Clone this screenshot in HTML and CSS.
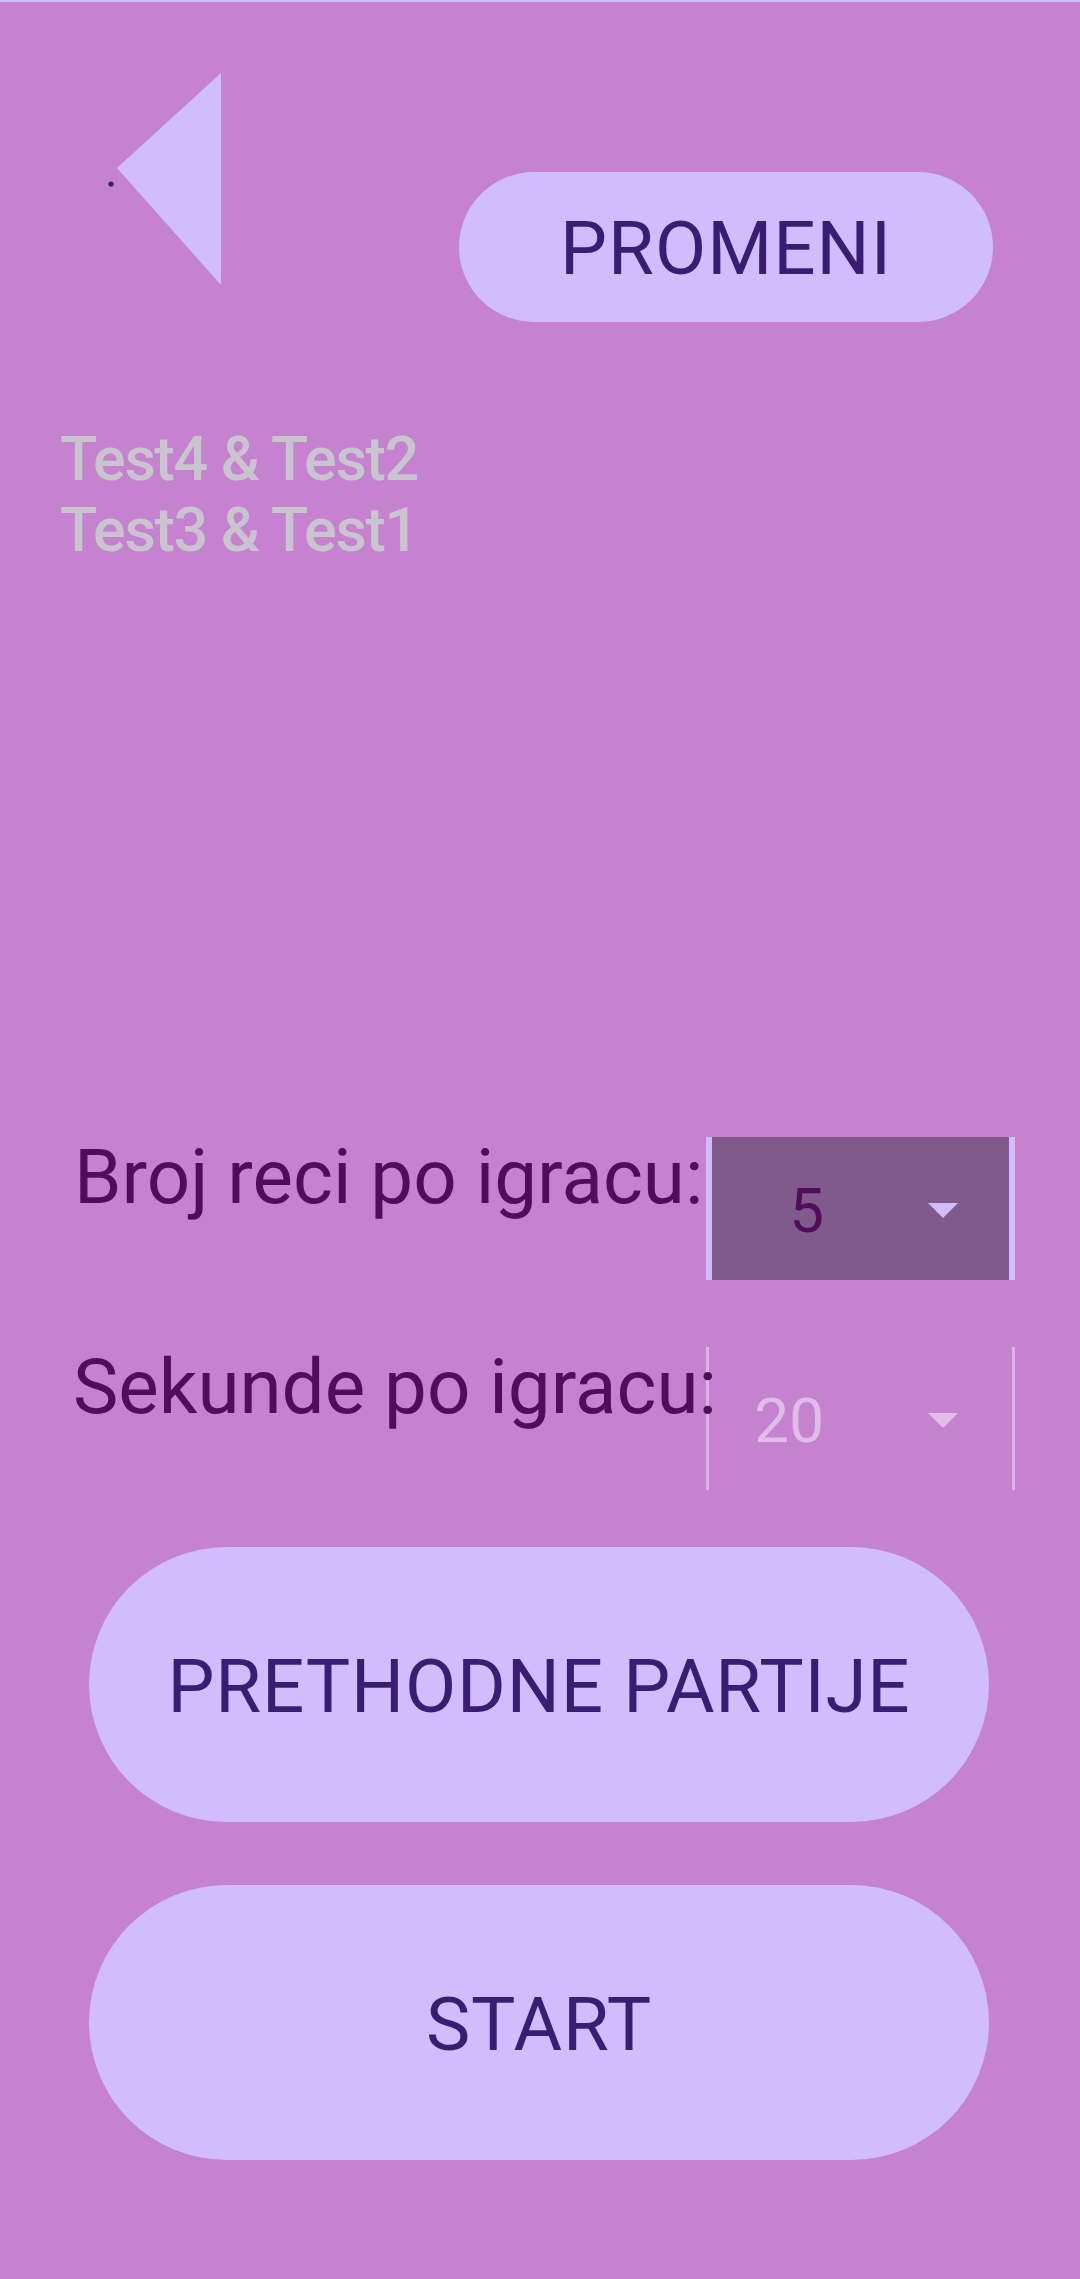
FILE: index.html
```html
<!DOCTYPE html>
<html lang="sr">
<head>
<meta charset="utf-8">
<title>Igra</title>
<link rel="stylesheet" href="styles.css">
</head>
<body>
<div class="screen">
  <div class="topline"></div>
  <header class="top">
    <button class="back" aria-label="Nazad">
      <svg width="130" height="240" viewBox="0 0 130 240">
        <polygon points="121,13 17,108 121,225" fill="#d0bcff"/>
        <circle cx="11" cy="124" r="2.6" fill="#381e72"/>
      </svg>
    </button>
    <button class="pill pill-small">PROMENI</button>
  </header>

  <div class="names">
    <div>Test4 &amp; Test2</div>
    <div>Test3 &amp; Test1</div>
  </div>

  <section class="settings">
    <div class="row">
      <div class="label">Broj reci po igracu:</div>
      <div class="dd dd-sel">
        <span class="val">5</span>
        <span class="arrow"></span>
      </div>
    </div>
    <div class="row">
      <div class="label">Sekunde po igracu:</div>
      <div class="dd dd-off">
        <span class="val">20</span>
        <span class="arrow"></span>
      </div>
    </div>
  </section>

  <div class="actions">
    <button class="pill pill-big">PRETHODNE PARTIJE</button>
    <button class="pill pill-big">START</button>
  </div>
</div>
</body>
</html>
```

FILE: styles.css
```css
html, body {
  margin: 0;
  padding: 0;
}
body {
  background: #c482cf;
  font-family: Roboto, "Noto Sans", sans-serif;
}
.screen {
  width: 1080px;
  min-height: 2279px;
  background: #c482cf;
}
.topline {
  height: 2px;
  background: #d0bcff;
}
.top {
  display: flex;
  justify-content: space-between;
  align-items: flex-start;
  padding: 0 87px 0 100px;
}
.back {
  margin: 58px 0 0 0;
  padding: 0;
  border: 0;
  background: none;
  width: 130px;
  height: 240px;
  display: block;
}
.back svg {
  display: block;
}
.pill {
  border: 0;
  background: #d0bcff;
  color: #381e72;
  font-family: Roboto, "Noto Sans", sans-serif;
  font-size: 74.5px;
  font-weight: 400;
  border-radius: 999px;
  display: flex;
  align-items: center;
  justify-content: center;
  padding: 5px 0 0 0;
  line-height: 1;
}
.pill-small {
  margin-top: 170px;
  width: 534px;
  height: 150px;
  letter-spacing: 1px;
}
.names {
  margin-top: 102px;
  padding-left: 60px;
  color: #cac4d0;
  font-size: 61px;
  font-weight: 500;
  line-height: 71px;
  letter-spacing: -1.3px;
}
.settings {
  margin-top: 571px;
  display: flex;
  flex-direction: column;
  gap: 67px;
}
.row {
  display: grid;
  grid-template-columns: 632px 309px;
  padding-left: 74px;
  height: 143px;
}
.label {
  position: relative;
  z-index: 1;
  white-space: nowrap;
  color: #510d5c;
  font-size: 76.3px;
  line-height: 80px;
}
.row + .row .label {
  margin-left: -1px;
}
.dd {
  box-sizing: border-box;
  height: 143px;
  display: flex;
  align-items: flex-start;
}
.dd-sel {
  background: #7f5a8b;
  border-left: 6px solid #d0bcff;
  border-right: 6px solid #d0bcff;
}
.dd-off {
  border-left: 3px solid #dcb3e6;
  border-right: 3px solid #dcb3e6;
  padding-left: 3px;
}
.val {
  width: 112px;
  text-align: right;
  font-size: 62px;
  line-height: 62px;
  margin-top: 43px;
  color: #510d5c;
}
.dd-off .val {
  color: #dfbde8;
}
.arrow {
  margin-left: 104px;
  margin-top: 66px;
  width: 0;
  height: 0;
  border-left: 15px solid transparent;
  border-right: 15px solid transparent;
  border-top: 15px solid #d0bcff;
}
.dd-off .arrow {
  border-top-color: #dfbde8;
}
.actions {
  margin-top: 57px;
  padding-left: 89px;
  display: flex;
  flex-direction: column;
  gap: 63px;
}
.pill-big {
  width: 900px;
  height: 275px;
  letter-spacing: 0.8px;
}
```
